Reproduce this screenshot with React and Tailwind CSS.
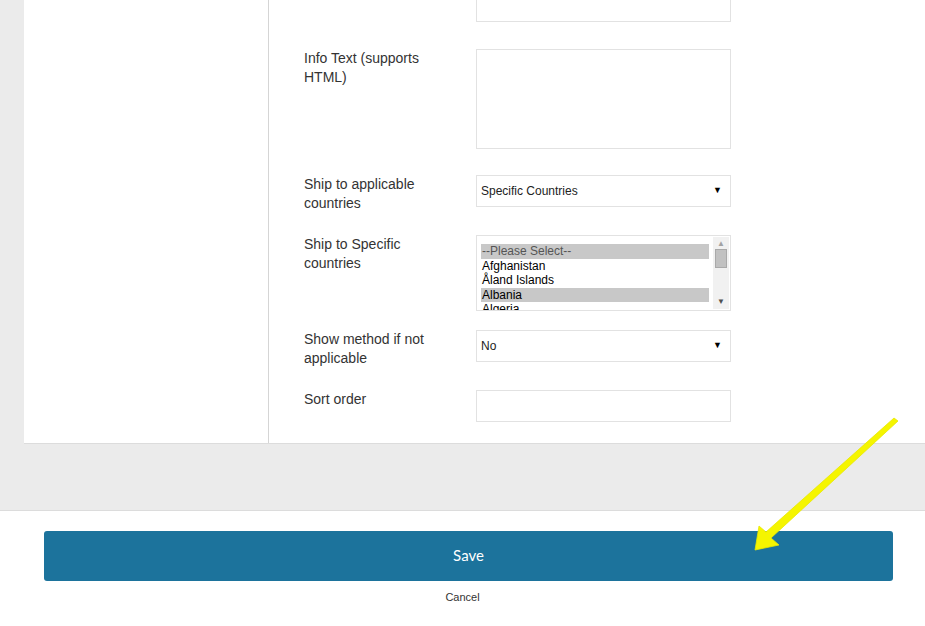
import React from "react";

const countries = [
  { name: "--Please Select--", selected: true, muted: true },
  { name: "Afghanistan" },
  { name: "Åland Islands" },
  { name: "Albania", selected: true },
  { name: "Algeria" },
];

function Label({ children }) {
  return (
    <div className="w-[172px] shrink-0 pr-4 text-[14px] leading-[19px] text-[#333]">
      {children}
    </div>
  );
}

function FakeSelect({ value }) {
  return (
    <div className="flex h-[32px] w-[255px] items-center justify-between border border-[#e2e2e2] bg-white pl-[4px] pr-[8px] text-[12px] text-[#222]">
      <span>{value}</span>
      <span className="text-[9px] text-black">▼</span>
    </div>
  );
}

function CountryList() {
  return (
    <div className="flex h-[76px] w-[255px] overflow-hidden border border-[#e2e2e2] bg-white">
      <div className="flex-1 overflow-hidden pl-[4px] pr-[4px] pt-[8px]">
        {countries.map((c) => (
          <div
            key={c.name}
            className={`h-[14.5px] px-[1px] text-[12px] leading-[14.5px] ${
              c.selected ? "bg-[#c8c8c8]" : ""
            } ${c.muted ? "text-[#555]" : "text-black"}`}
          >
            {c.name}
          </div>
        ))}
      </div>
      <div className="my-[1px] mr-[1px] flex w-[16px] flex-col items-center bg-[#f1f1f1]">
        <span className="mt-[3px] text-[8px] leading-[8px] text-[#a3a3a3]">▲</span>
        <div className="mt-[1px] h-[19px] w-[12px] border border-[#a9a9a9] bg-[#c1c1c1]" />
        <span className="mt-auto mb-[3px] text-[8px] leading-[8px] text-[#505050]">▼</span>
      </div>
    </div>
  );
}

export default function App() {
  return (
    <div
      className="relative h-[626px] w-[925px] overflow-hidden bg-white"
      style={{ fontFamily: '"Liberation Sans", Arial, sans-serif' }}
    >
      <div className="h-[511px] overflow-hidden border-b border-[#dcdcdc] bg-[#ebebeb]">
        <div className="ml-[24px] flex border-b border-[#dcdcdc] bg-white">
          <div className="w-[245px] shrink-0 border-r border-[#d5d5d5]" />
          <div className="flex-1 pl-[35px] pb-[21px]">
            <div className="mt-[-10px] flex items-start">
              <Label />
              <div className="h-[32px] w-[255px] border border-[#e2e2e2] bg-white" />
            </div>

            <div className="mt-[27px] flex items-start">
              <Label>Info Text (supports HTML)</Label>
              <div className="h-[100px] w-[255px] border border-[#e2e2e2] bg-white" />
            </div>

            <div className="mt-[26px] flex items-start">
              <Label>Ship to applicable countries</Label>
              <FakeSelect value="Specific Countries" />
            </div>

            <div className="mt-[22px] flex items-start">
              <Label>Ship to Specific countries</Label>
              <CountryList />
            </div>

            <div className="mt-[19px] flex items-start">
              <Label>Show method if not applicable</Label>
              <FakeSelect value="No" />
            </div>

            <div className="mt-[22px] flex items-start">
              <Label>Sort order</Label>
              <div className="h-[32px] w-[255px] border border-[#e2e2e2] bg-white" />
            </div>
          </div>
        </div>
      </div>

      <div className="pt-[20px]">
        <button
          className="ml-[44px] flex h-[50px] w-[849px] items-center justify-center rounded-[3px] bg-[#1c739c] pb-[2px] text-[15px] text-white"
          style={{ fontFamily: "Lato, sans-serif" }}
        >
          Save
        </button>
        <div className="mt-[8px] text-center text-[11px] text-[#333]">Cancel</div>
      </div>

      <svg
        className="pointer-events-none absolute left-0 top-0"
        width="925"
        height="626"
        viewBox="0 0 925 626"
      >
        <polygon
          points="755,550 759,526 766,532 894,418 898,421 771,538 779,545"
          fill="#f5f500"
          stroke="#e8e800"
          strokeWidth="0.8"
          strokeLinejoin="round"
        />
      </svg>
    </div>
  );
}
